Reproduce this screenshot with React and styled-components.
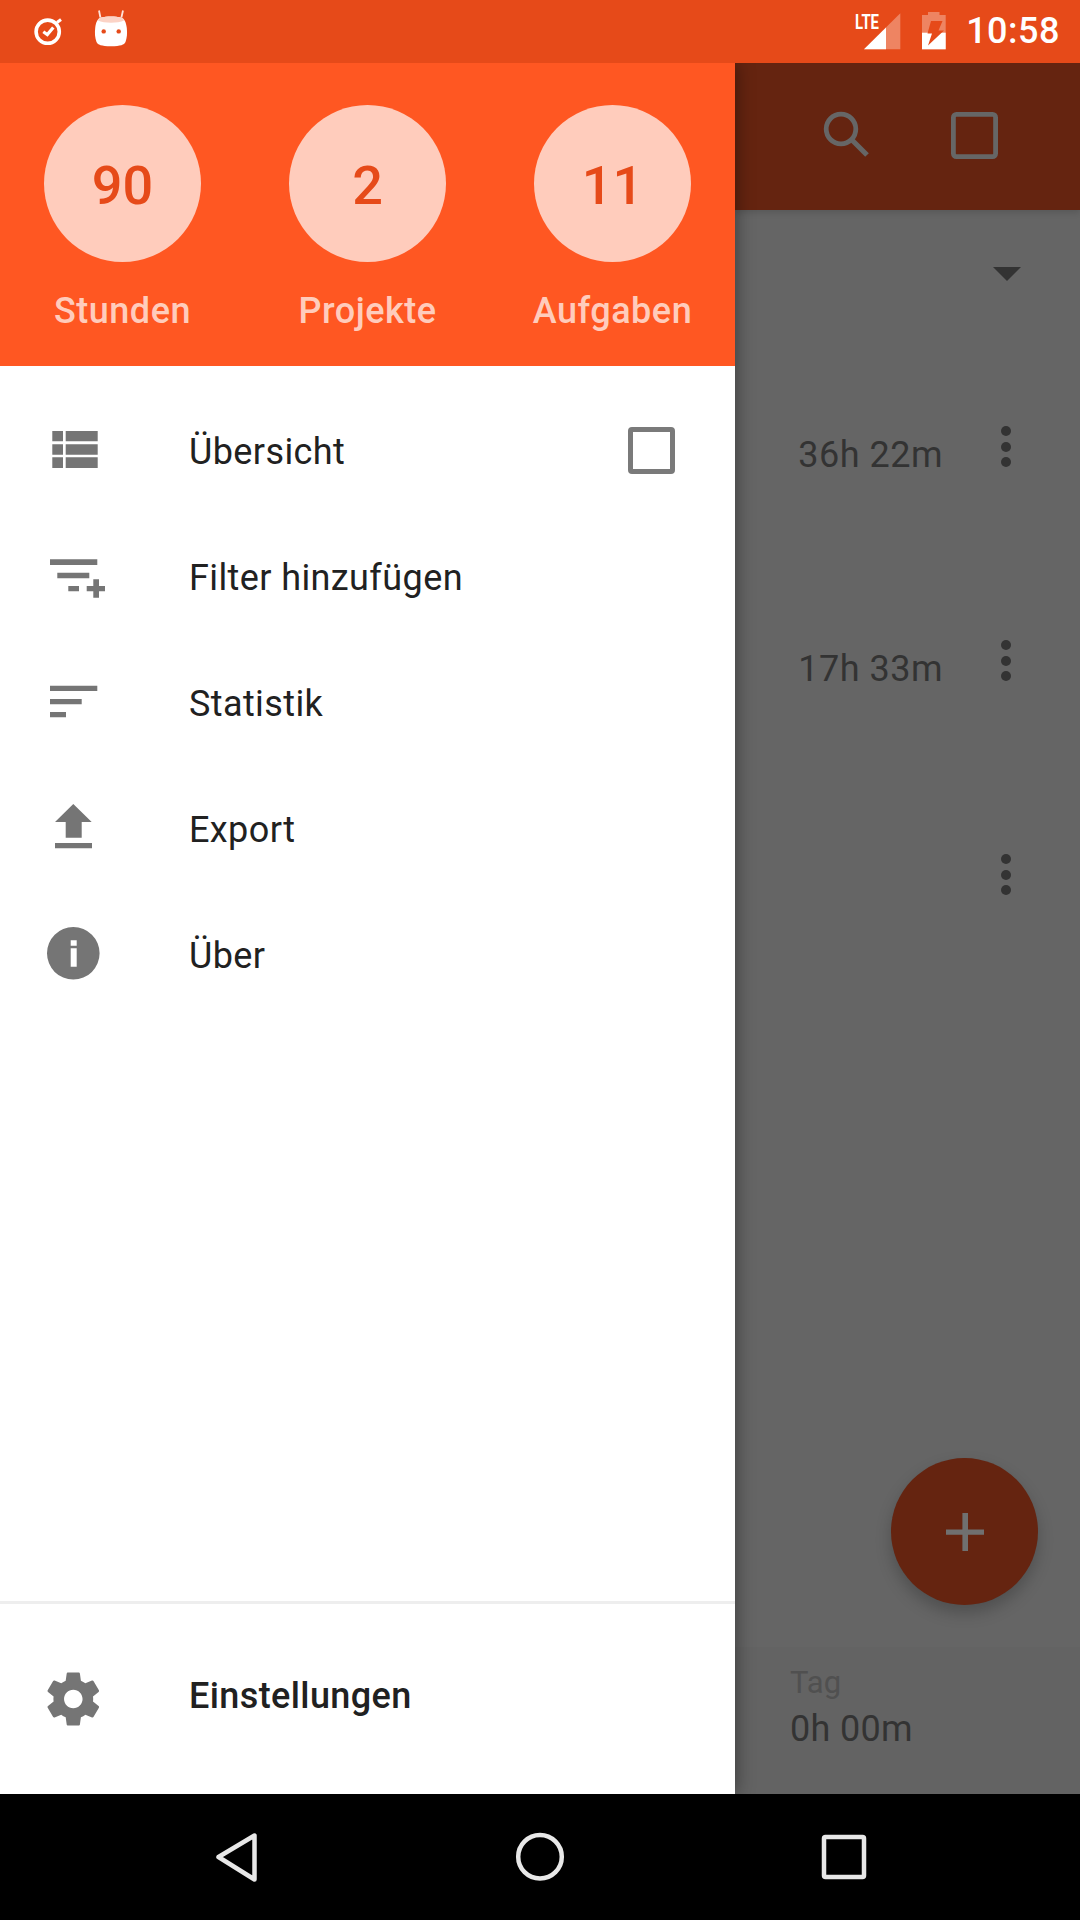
import React from 'react';
import styled, { createGlobalStyle } from 'styled-components';

const GlobalStyle = createGlobalStyle`
  * { box-sizing: border-box; }
  html, body { margin: 0; padding: 0; background: #000; }
  body { font-family: Roboto, "Noto Sans", sans-serif; }
`;

const Page = styled.div`
  width: 1080px;
  height: 1920px;
  display: flex;
  flex-direction: column;
  overflow: hidden;
`;

const StatusBar = styled.div`
  position: relative;
  z-index: 3;
  height: 63px;
  flex: none;
  background-color: #e64a19;
  display: flex;
  align-items: stretch;
  padding: 0 20px 0 28px;
`;

const StatusIcon = styled.svg`
  display: block;
  height: 63px;
  flex: none;
  margin-left: ${({ $gap }) => $gap || 0}px;
`;

const Spacer = styled.div`
  flex: 1;
`;

const Clock = styled.div`
  margin-left: 19px;
  color: #fff;
  font-size: 36px;
  font-weight: 500;
  line-height: 63px;
  letter-spacing: 0.5px;
`;

const Main = styled.div`
  flex: 1;
  min-height: 0;
  display: flex;
`;

const Drawer = styled.div`
  position: relative;
  width: 735px;
  flex: none;
  background-color: #fff;
  display: flex;
  flex-direction: column;
  box-shadow: 0 0 18px rgba(0, 0, 0, 0.45);
  z-index: 2;
`;

const Header = styled.div`
  height: 303px;
  flex: none;
  background-color: #ff5722;
  display: grid;
  grid-template-columns: repeat(3, 1fr);
  padding-top: 42px;
`;

const Stat = styled.div`
  display: flex;
  flex-direction: column;
  align-items: center;
  color: #ffccbc;
`;

const StatCircle = styled.div`
  width: 157px;
  height: 157px;
  border-radius: 50%;
  background-color: #ffccbc;
  color: #e64a19;
  font-size: 54px;
  font-weight: 500;
  padding-top: 4px;
  display: flex;
  align-items: center;
  justify-content: center;
`;

const StatLabel = styled.div`
  margin-top: 28px;
  font-size: 36px;
  font-weight: 500;
  line-height: 42px;
  letter-spacing: 0.5px;
  white-space: nowrap;
`;

const Menu = styled.div`
  flex: 1;
  padding-top: 22px;
`;

const MenuRow = styled.div`
  height: 126px;
  display: flex;
  align-items: center;
  padding-left: 37px;
  color: #212121;
  font-size: 36px;
  letter-spacing: 0.4px;
  font-weight: ${({ $bold }) => ($bold ? 500 : 400)};
`;

const MenuIcon = styled.svg`
  display: block;
  width: 72px;
  height: 72px;
  flex: none;
  margin-right: 80px;
  overflow: visible;
  fill: #757575;
`;

const MenuText = styled.span`
  flex: 1;
  padding-top: ${({ $bold }) => ($bold ? 0 : 1)}px;
`;

const CheckBox = styled.div`
  width: 47px;
  height: 47px;
  margin-right: 60px;
  margin-top: -2px;
  border: 5px solid #7a7a7a;
  border-radius: 4px;
`;

const Divider = styled.div`
  height: 3px;
  flex: none;
  background-color: #eeeeee;
`;

const Footer = styled.div`
  height: 190px;
  flex: none;
  display: flex;
  flex-direction: column;
  padding-top: 29px;
`;

const Backdrop = styled.div`
  position: relative;
  flex: 1;
  min-width: 0;
  background-color: #656565;
  display: flex;
  flex-direction: column;
`;

const Toolbar = styled.div`
  height: 147px;
  flex: none;
  background-color: #652410;
  display: flex;
  box-shadow: 0 3px 6px rgba(0, 0, 0, 0.12);
`;

const ToolIcon = styled.svg`
  display: block;
  width: 345px;
  height: 147px;
`;

const FilterRow = styled.div`
  height: 129px;
  flex: none;
  display: flex;
  justify-content: flex-end;
  align-items: center;
  padding: 0 59px 0 0;
`;

const Caret = styled.div`
  width: 0;
  height: 0;
  margin-bottom: 1px;
  border-left: 14px solid transparent;
  border-right: 14px solid transparent;
  border-top: 14px solid #333;
`;

const Row = styled.div`
  height: 214px;
  flex: none;
  display: flex;
  align-items: flex-start;
  justify-content: flex-end;
  padding: 82px 69px 0 0;
`;

const RowTime = styled.span`
  color: #333;
  font-size: 36px;
  line-height: 42px;
  letter-spacing: 0.5px;
  margin-right: 58px;
  margin-top: 13px;
`;

const Dots = styled.div`
  width: 10px;
  display: flex;
  flex-direction: column;
  gap: 5.7px;
  margin-top: 5px;
`;

const Dot = styled.div`
  width: 10px;
  height: 10px;
  border-radius: 50%;
  background-color: #333;
`;

const Summary = styled.div`
  margin-top: auto;
  height: 147px;
  flex: none;
  background-color: #636363;
  padding: 15px 0 0 55px;
`;

const SummaryLabel = styled.div`
  color: #505050;
  font-size: 31px;
  line-height: 42px;
`;

const SummaryValue = styled.div`
  color: #333;
  font-size: 36px;
  line-height: 46px;
  letter-spacing: 0.3px;
  margin-top: 2px;
`;

const Fab = styled.div`
  position: absolute;
  right: 42px;
  bottom: 189px;
  width: 147px;
  height: 147px;
  border-radius: 50%;
  background-color: #652410;
  box-shadow: 0 8px 16px rgba(0, 0, 0, 0.22);
  display: flex;
  align-items: center;
  justify-content: center;
`;

const NavBar = styled.div`
  height: 126px;
  flex: none;
  background-color: #000;
  display: flex;
  justify-content: center;
`;

const NavButton = styled.svg`
  display: block;
  width: 304px;
  height: 126px;
`;

const ViewListIcon = () => (
  <MenuIcon viewBox="0 0 72 72">
    <path d="M15.3 16H26v10.3H15.3zM28.7 16h32v10.3h-32zM15.3 29.3H26v10.4H15.3zM28.7 29.3h32v10.4h-32zM15.3 42.3H26V53H15.3zM28.7 42.3h32V53h-32z" />
  </MenuIcon>
);

const FilterAddIcon = () => (
  <MenuIcon viewBox="0 0 72 72">
    <path d="M13 18.3h47.3V24H13zM20.3 31.7h32v5.6h-32zM31.3 45H42v5.3H31.3zM49.7 45h6.6v-6.7H62V45h6v5.3h-6v6.4h-5.7v-6.4h-6.6z" />
  </MenuIcon>
);

const SortIcon = () => (
  <MenuIcon viewBox="0 0 72 72">
    <path d="M13 18.7h47.3V24H13zM13 32h31.7v5.3H13zM13 45h16v5.3H13z" />
  </MenuIcon>
);

const UploadIcon = () => (
  <MenuIcon viewBox="0 0 72 72">
    <path d="M36.3 11 54.7 29H44.7V44.7H28.7V29H18zM18 50h37v5.3H18z" />
  </MenuIcon>
);

const InfoIcon = () => (
  <MenuIcon viewBox="0 0 72 72">
    <path
      fillRule="evenodd"
      d="M36.3 8a26.3 26.3 0 1 0 0 52.6 26.3 26.3 0 0 0 0-52.6zM33.7 21.3h6v5.4h-6zM33.7 29.3h6v18.4h-6z"
    />
  </MenuIcon>
);

const GearIcon = () => (
  <MenuIcon viewBox="0 0 72 72">
    <g transform="translate(4.5 7.2) scale(2.65)">
      <path d="M19.43 12.98c.04-.32.07-.64.07-.98s-.03-.66-.07-.98l2.11-1.65c.19-.15.24-.42.12-.64l-2-3.46c-.12-.22-.39-.3-.61-.22l-2.49 1c-.52-.4-1.08-.73-1.69-.98l-.38-2.65C14.46 2.18 14.25 2 14 2h-4c-.25 0-.46.18-.49.42l-.38 2.65c-.61.25-1.17.59-1.69.98l-2.49-1c-.23-.09-.49 0-.61.22l-2 3.46c-.13.22-.07.49.12.64l2.11 1.65c-.04.32-.07.65-.07.98s.03.66.07.98l-2.11 1.65c-.19.15-.24.42-.12.64l2 3.46c.12.22.39.3.61.22l2.49-1c.52.4 1.08.73 1.69.98l.38 2.65c.03.24.24.42.49.42h4c.25 0 .46-.18.49-.42l.38-2.65c.61-.25 1.17-.59 1.69-.98l2.49 1c.23.09.49 0 .61-.22l2-3.46c.12-.22.07-.49-.12-.64l-2.11-1.65zM12 15.5c-1.93 0-3.5-1.57-3.5-3.5s1.57-3.5 3.5-3.5 3.5 1.57 3.5 3.5-1.57 3.5-3.5 3.5z" />
    </g>
  </MenuIcon>
);

const menuItems = [
  { label: 'Filter hinzufügen', Icon: FilterAddIcon },
  { label: 'Statistik', Icon: SortIcon },
  { label: 'Export', Icon: UploadIcon },
  { label: 'Über', Icon: InfoIcon },
];

const stats = [
  { value: '90', label: 'Stunden' },
  { value: '2', label: 'Projekte' },
  { value: '11', label: 'Aufgaben' },
];

const rows = ['36h 22m', '17h 33m', ''];

const App = () => {
  return (
    <Page>
      <GlobalStyle />
      <StatusBar>
        <StatusIcon width="42" viewBox="0 0 42 63">
          <circle cx="19.7" cy="31.7" r="11.6" fill="none" stroke="#fff" strokeWidth="3.6" />
          <path d="M15.3 31.7l4 2.8 6-7" fill="none" stroke="#fff" strokeWidth="3.2" />
          <path d="M29 22.5l4-3" fill="none" stroke="#fff" strokeWidth="3" />
        </StatusIcon>
        <StatusIcon $gap={23} width="38" viewBox="0 0 38 63">
          <path d="M6 10.5l1.4 7M30 10.5l-1.6 7" fill="none" stroke="#ffe3da" strokeWidth="1.8" />
          <path d="M8 17.5C13 16 23 16 28 17.5C31.5 18.5 33 22 33.8 28C34.4 33 34 38 32.5 42C31 45 28 46 18 46.3C8 46 5 45 3.5 42C2 38 1.6 33 2.2 28C3 22 4.5 18.5 8 17.5z" fill="#fff" />
          <path d="M8 17.5C13 16 23 16 28 17.5C30 18 31 19.5 31 20.5C25 23.5 11 23.5 5 20.5C5 19.5 6 18 8 17.5z" fill="#fbd3c6" />
          <circle cx="10.7" cy="31.4" r="2.2" fill="#e64a19" />
          <circle cx="25.7" cy="31.4" r="2.2" fill="#e64a19" />
        </StatusIcon>
        <Spacer />
        <StatusIcon width="47" viewBox="0 0 47 63">
          <text x="1" y="29" fontFamily="Roboto, sans-serif" fontWeight="700" fontSize="21" fill="#fff" textLength="24" lengthAdjust="spacingAndGlyphs">LTE</text>
          <path d="M10 49.3L46.3 13.3V49.3z" fill="#fff" fillOpacity="0.32" />
          <path d="M10 49.3L32 27.5V49.3z" fill="#fff" />
        </StatusIcon>
        <StatusIcon $gap={20} width="26" viewBox="0 0 26 63">
          <path d="M7 12h11.5v3H24.7v34.3H1V15h6z" fill="#fff" fillOpacity="0.32" />
          <path d="M1 32.7H24.7V49.3H1z" fill="#fff" />
          <path d="M10 21H21.5L17.5 30.5H23L7 45.5L11 33.5H6.5z" fill="#e64a19" />
        </StatusIcon>
        <Clock>10:58</Clock>
      </StatusBar>

      <Main>
        <Drawer>
          <Header>
            {stats.map((stat) => (
              <Stat key={stat.label}>
                <StatCircle>{stat.value}</StatCircle>
                <StatLabel>{stat.label}</StatLabel>
              </Stat>
            ))}
          </Header>
          <Menu>
            <MenuRow>
              <ViewListIcon />
              <MenuText>Übersicht</MenuText>
              <CheckBox />
            </MenuRow>
            {menuItems.map(({ label, Icon }) => (
              <MenuRow key={label}>
                <Icon />
                <MenuText>{label}</MenuText>
              </MenuRow>
            ))}
          </Menu>
          <Divider />
          <Footer>
            <MenuRow $bold>
              <GearIcon />
              <MenuText $bold>Einstellungen</MenuText>
            </MenuRow>
          </Footer>
        </Drawer>

        <Backdrop>
          <Toolbar>
            <ToolIcon viewBox="0 0 345 147">
              <circle cx="106" cy="66" r="14.8" fill="none" stroke="#666" strokeWidth="4.8" />
              <path d="M116.5 76.5L132 92" fill="none" stroke="#666" strokeWidth="5.2" />
              <rect x="218.4" y="51.4" width="42.2" height="42.2" rx="3" fill="none" stroke="#666" strokeWidth="4.8" />
            </ToolIcon>
          </Toolbar>
          <FilterRow>
            <Caret />
          </FilterRow>
          {rows.map((time, i) => (
            <Row key={i}>
              <RowTime>{time}</RowTime>
              <Dots>
                <Dot />
                <Dot />
                <Dot />
              </Dots>
            </Row>
          ))}
          <Summary>
            <SummaryLabel>Tag</SummaryLabel>
            <SummaryValue>0h 00m</SummaryValue>
          </Summary>
          <Fab>
            <svg width="38" height="38" viewBox="0 0 38 38">
              <path d="M16.4 0h5.600v16.400H38v5.400H22V38h-5.600V21.800H0v-5.400h16.400z" fill="#707070" />
            </svg>
          </Fab>
        </Backdrop>
      </Main>

      <NavBar>
        <NavButton viewBox="0 0 304 126">
          <path d="M170.5 41.5V85.5L134.5 63z" fill="none" stroke="#e8e8e8" strokeWidth="4.5" strokeLinejoin="round" />
        </NavButton>
        <NavButton viewBox="0 0 304 126">
          <circle cx="152" cy="62.7" r="21.8" fill="none" stroke="#e8e8e8" strokeWidth="4.5" />
        </NavButton>
        <NavButton viewBox="0 0 304 126">
          <rect x="132" y="43" width="40" height="40" rx="1.5" fill="none" stroke="#e8e8e8" strokeWidth="4.5" />
        </NavButton>
      </NavBar>
    </Page>
  );
};

export default App;
